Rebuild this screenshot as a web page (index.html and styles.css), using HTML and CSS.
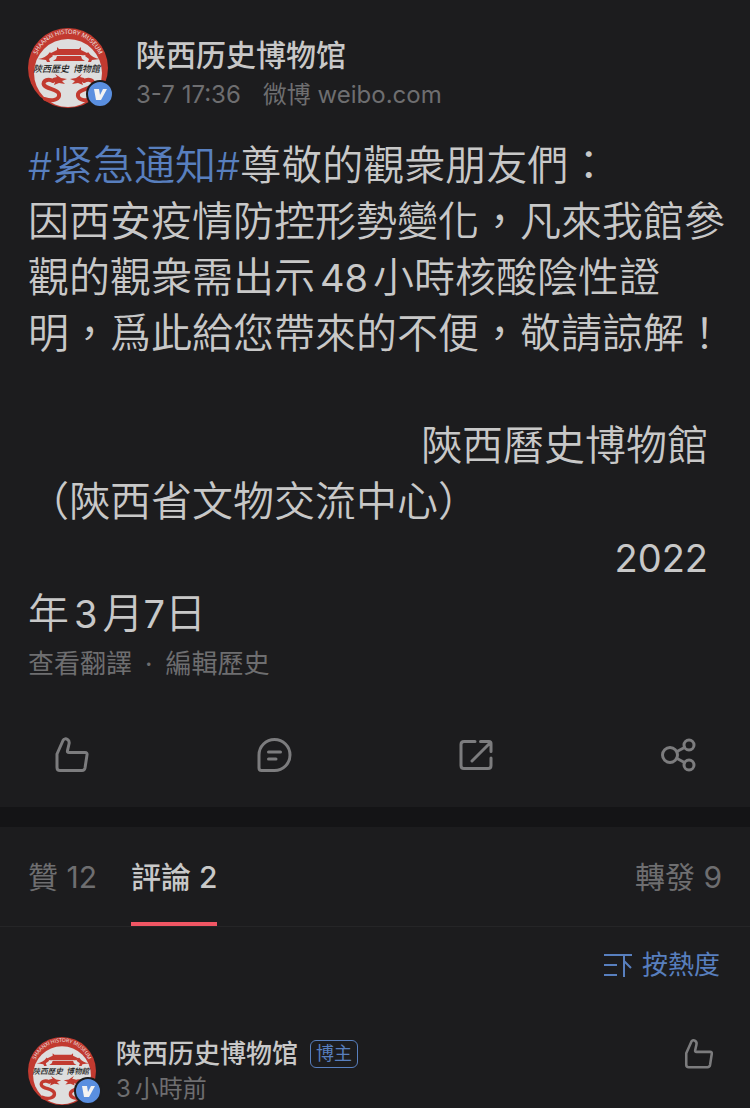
FILE: index.html
```html
<!DOCTYPE html>
<html lang="zh-Hant">
<head>
    <meta charset="UTF-8">
    <meta name="viewport" content="width=device-width, initial-scale=1.0">
    <title>微博</title>
    <link rel="stylesheet" href="styles.css">
</head>
<body>
    <!-- shared icons -->
    <svg class="sprite" aria-hidden="true">
        <symbol id="vip" viewBox="0 0 28 28">
            <circle cx="14" cy="14" r="13" fill="#5a8fe0" stroke="#1c1c1e" stroke-width="2"/>
            <path d="M8 9h5l1 6 3-6h4l-6 11h-5z" fill="#f2f2f2"/>
        </symbol>
        <symbol id="like" viewBox="0 0 40 40">
            <path d="M5 19 11 5.500C12 3.500 14 3.500 15.500 4.500 17 5.500 17.500 7 17 9L15.500 15.500Q15 17.500 17 17.500H33Q35.500 17.500 35 20L33 33Q32.500 35.500 30 35.500H8Q5 35.500 5 32.500Z"/>
        </symbol>
        <symbol id="comment" viewBox="0 0 40 40">
            <path d="M7.500 35.500Q5 35.500 5 33V20A15.500 15.500 0 1 1 20.500 35.500ZM14.500 17h12M14.500 24h7.500"/>
        </symbol>
        <symbol id="forward" viewBox="0 0 40 40">
            <path d="M19 6.500H8Q5 6.500 5 9.500V30.500Q5 33.500 8 33.500H32Q35 33.500 35 30.500V23M24.500 6.500H33Q35 6.500 35 8.500V16.500M16 26 34 8"/>
        </symbol>
        <symbol id="share" viewBox="0 0 40 40">
            <circle cx="12" cy="20" r="7.500"/>
            <circle cx="31" cy="10" r="5"/>
            <circle cx="31" cy="30" r="5"/>
            <path d="m19 16.500 7.500-4M19 23.500l7.500 4"/>
        </symbol>
    </svg>

    <article class="post">
        <header class="post-header">
            <a class="avatar" href="#" aria-label="陕西历史博物馆">
                <svg class="avatar-img" viewBox="0 0 80 80">
                    <g id="logo">
                        <circle cx="40" cy="40" r="40" fill="#c23a30"/>
                        <circle cx="40" cy="45" r="34" fill="#dedede"/>
                        <path id="ring" d="M7 33.500A33.500 33.500 0 0 1 73 33.500" fill="none"/>
                        <text class="logo-ring" text-anchor="middle"><textPath href="#ring" startOffset="50%">SHAANXI HISTORY MUSEUM</textPath></text>
                        <g fill="#c23a30">
                            <path d="M29 19l2 2h20l2-2v3l8 4q-4 2-8 1H29q-4 1-8-1l8-4z"/>
                            <path d="M29 28h24l1 3 3 2H25l3-2z"/>
                            <path d="M22 24l3 4-4 3 1 3h-3l-1-2-8-1q8-1 12-7zM60 24l-3 4 4 3-1 3h3l1-2 8-1q-8-1-12-7z"/>
                            <path d="M25 50l4-1-2-3 6 4 6 1-5 2 3 3-6-1-5 2 1-3-4-1zM56 50l-4-1 2-3-6 4-6 1 5 2-3 3 6-1 5 2-1-3 4-1z"/>
                        </g>
                        <g fill="none" stroke="#c23a30" stroke-width="4" stroke-linecap="round">
                            <path d="M25 53c-5-3-11 0-9 4s14 4 15 9-6 8-14 5"/>
                            <path d="M56 53c5-3 11 0 9 4s-14 4-15 9 6 8 14 5"/>
                        </g>
                        <text class="logo-name" x="5" y="44">陝西歷史</text>
                        <text class="logo-name" x="45" y="44">博物館</text>
                    </g>
                </svg>
                <svg class="vip"><use href="#vip"/></svg>
            </a>
            <div class="author">
                <a class="author-name" href="#" lang="zh-Hans">陕西历史博物馆</a>
                <div class="author-info"><span>3-7 17:36</span><span>微博 weibo.com</span></div>
            </div>
        </header>

        <div class="post-text">
            <p><a class="topic" href="#" lang="zh-Hans"><span class="num">#</span>紧急通知<span class="num">#</span></a>尊敬的觀衆朋友們：</p>
            <p>因西安疫情防控形勢變化，凡來我館參觀的觀衆需出示<span class="num gap">48</span>小時核酸陰性證明，爲此給您帶來的不便，敬請諒解！</p>
            <p class="sign first">陝西曆史博物館</p>
            <p>（陝西省文物交流中心）</p>
            <p class="sign"><span class="num">2022</span></p>
            <p>年<span class="num gap">3</span>月<span class="num">7</span>日</p>
        </div>
        <div class="post-links"><a href="#">查看翻譯</a><span>·</span><a href="#">編輯歷史</a></div>

        <div class="actions">
            <button class="icon-button" aria-label="讚"><svg class="icon"><use href="#like"/></svg></button>
            <button class="icon-button" aria-label="評論"><svg class="icon"><use href="#comment"/></svg></button>
            <button class="icon-button" aria-label="轉發"><svg class="icon"><use href="#forward"/></svg></button>
            <button class="icon-button" aria-label="分享"><svg class="icon"><use href="#share"/></svg></button>
        </div>
    </article>

    <section class="comments">
        <nav class="tabs">
            <button class="tab">贊 12</button>
            <button class="tab active">評論 2</button>
            <button class="tab last">轉發 9</button>
        </nav>
        <div class="sort">
            <button class="sort-button">
                <svg class="sort-icon" viewBox="0 0 30 26"><path d="M1 3h28M1 13h13M1 23h13M21 3v22M21 9l7 7"/></svg>
                按熱度
            </button>
        </div>
        <div class="comment">
            <a class="avatar small" href="#" aria-label="陕西历史博物馆">
                <svg class="avatar-img" viewBox="0 0 80 80"><use href="#logo"/></svg>
                <svg class="vip"><use href="#vip"/></svg>
            </a>
            <div class="comment-author">
                <div class="comment-title">
                    <a class="comment-name" href="#" lang="zh-Hans">陕西历史博物馆</a>
                    <span class="badge">博主</span>
                </div>
                <div class="comment-time"><span>3</span><span>小時前</span></div>
            </div>
            <button class="icon-button" aria-label="讚"><svg class="icon small" viewBox="0 0 40 40"><use href="#like"/></svg></button>
        </div>
    </section>
</body>
</html>
```
FILE: styles.css
```css
* {
    box-sizing: border-box;
}

body {
    margin: 0;
    background-color: #1c1c1e;
    color: #c8c8c8;
    font-family: Inter, "Noto Sans CJK TC", sans-serif;
}

[lang="zh-Hans"] {
    font-family: Inter, "Noto Sans CJK SC", sans-serif;
}

a {
    color: inherit;
    text-decoration: none;
}

button {
    padding: 0;
    border: 0;
    background: none;
    color: inherit;
    font: inherit;
    cursor: pointer;
}

p {
    margin: 0;
}

svg {
    display: block;
}

.sprite {
    position: absolute;
    width: 0;
    height: 0;
}

.logo-ring {
    fill: #eee;
    font: 500 6px "Open Sans", sans-serif;
}

.logo-name {
    fill: #222;
    font: italic 500 9px "Noto Sans CJK TC", sans-serif;
}

/* post */
.post-header {
    display: flex;
    gap: 28px;
    padding: 28px 28px 0;
}

.avatar {
    position: relative;
    flex: none;
    width: 80px;
    height: 80px;
}

.avatar-img {
    width: 100%;
    height: 100%;
}

.vip {
    position: absolute;
    right: -6px;
    bottom: 0;
    width: 28px;
    height: 28px;
}

.author {
    padding-top: 7px;
}

.author-name {
    display: block;
    font-size: 30px;
    font-weight: 500;
    line-height: 40px;
}

.author-info {
    display: flex;
    gap: 22px;
    color: #6e6e70;
    font-size: 24px;
    line-height: 40px;
}

.post-text {
    padding: 22px 24px 0 28px;
    font-size: 41px;
    font-weight: 350;
    line-height: 56px;
}

.num {
    font-size: 38px;
    font-weight: 400;
    line-height: 38px;
}

.topic {
    color: #587fbe;
}

.topic .num {
    font-weight: 350;
}

.gap {
    margin: 0 5px;
}

.sign {
    padding-right: 18px;
    text-align: right;
}

.sign.first {
    margin-top: 56px;
}

.post-links {
    display: flex;
    gap: 13px;
    padding: 3px 28px 0;
    color: #6e6e70;
    font-size: 26px;
    line-height: 40px;
}

.actions {
    display: flex;
    justify-content: space-between;
    padding: 51px 52px 32px;
}

.icon {
    width: 40px;
    height: 40px;
    fill: none;
    stroke: #7c7c7e;
    stroke-width: 3;
    stroke-linecap: round;
    stroke-linejoin: round;
}

.icon.small {
    width: 34px;
    height: 34px;
}

/* comments */
.comments {
    border-top: 20px solid #141416;
}

.tabs {
    display: flex;
    gap: 34px;
    height: 100px;
    padding: 0 28px;
    border-bottom: 1px solid #252527;
    color: #6e6e70;
    font-size: 30px;
    line-height: 40px;
}

.tab {
    padding-top: 4px;
    border-bottom: 4px solid transparent;
}

.tab.active {
    border-bottom-color: #f05664;
    color: #c8c8c8;
    font-weight: 500;
}

.tab.last {
    margin-left: auto;
}

.sort {
    display: flex;
    justify-content: flex-end;
    padding: 18px 30px 0;
}

.sort-button {
    display: flex;
    align-items: center;
    gap: 9px;
    color: #587fbe;
    font-size: 26px;
    line-height: 40px;
}

.sort-icon {
    width: 30px;
    height: 26px;
    fill: none;
    stroke: #587fbe;
    stroke-width: 2;
}

.comment {
    display: flex;
    align-items: flex-start;
    gap: 20px;
    padding: 52px 34px 0 28px;
}

.avatar.small {
    width: 68px;
    height: 68px;
}

.comment-author {
    flex: 1;
}

.comment-title {
    display: flex;
    align-items: center;
    gap: 12px;
    height: 34px;
}

.comment-name {
    font-size: 26px;
    font-weight: 500;
    line-height: 34px;
}

.badge {
    padding: 0 5px;
    border: 1px solid #587fbe;
    border-radius: 6px;
    color: #587fbe;
    font-size: 18px;
    line-height: 26px;
}

.comment-time {
    display: flex;
    gap: 4px;
    color: #6e6e70;
    font-size: 24px;
    line-height: 36px;
}
```
